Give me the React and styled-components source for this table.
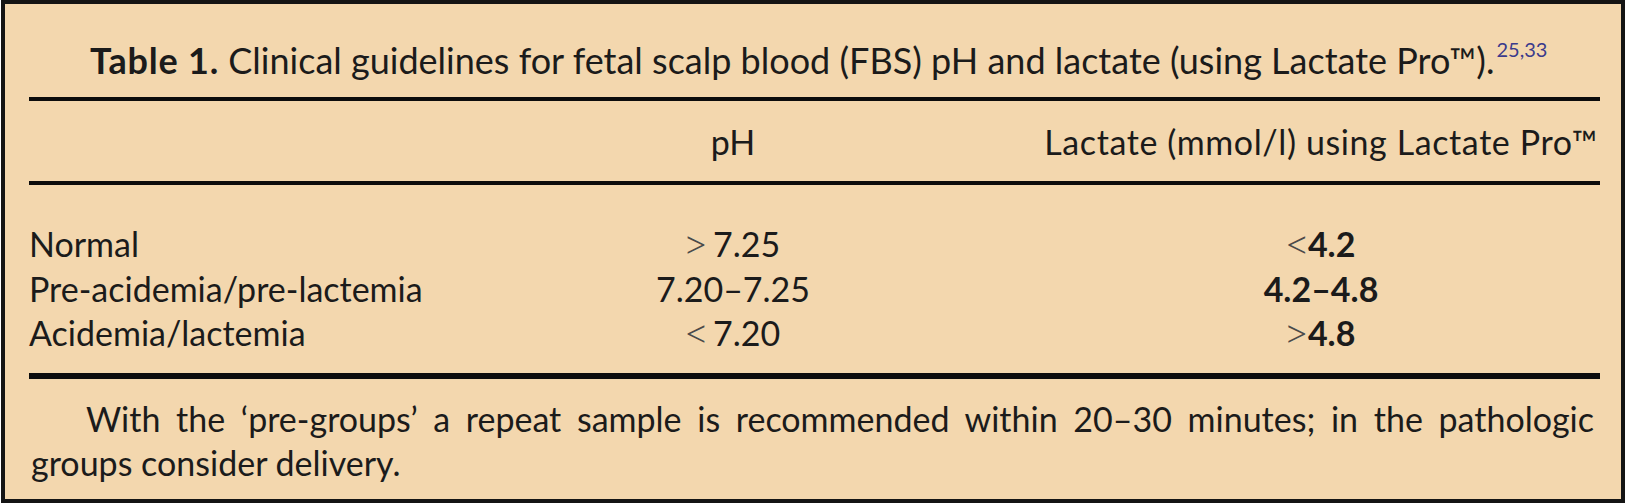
import styled, { createGlobalStyle } from 'styled-components';

const GlobalStyle = createGlobalStyle`
    html, body {
        margin: 0;
        padding: 0;
        background: #ffffff;
    }
    body {
        font-family: Lato, "Open Sans", sans-serif;
        color: #1b1b1b;
    }
`;

const rows = [
    { label: 'Normal', ph: ['>', '7.25'], lactate: ['<', '4.2'] },
    { label: 'Pre-acidemia/pre-lactemia', ph: ['', '7.20–7.25'], lactate: ['', '4.2–4.8'] },
    { label: 'Acidemia/lactemia', ph: ['<', '7.20'], lactate: ['>', '4.8'] },
];

const Value = ({ pair, spaced }) => (
    <>
        {pair[0] && <Relation $spaced={spaced}>{pair[0]}</Relation>}
        {pair[1]}
    </>
);

const App = () => {
    return (
        <>
            <GlobalStyle />
            <Panel>
                <Caption>
                    <CaptionLabel>Table 1.</CaptionLabel> Clinical guidelines for fetal scalp blood (FBS) pH and
                    lactate (using Lactate Pro™).<Ref>25,33</Ref>
                </Caption>
                <Rule />
                <HeadRow>
                    <Cell />
                    <Cell $center>pH</Cell>
                    <Cell $center $wide>Lactate (mmol/l) using Lactate Pro™</Cell>
                </HeadRow>
                <Rule />
                <Body>
                    {rows.map((row) => (
                        <BodyRow key={row.label}>
                            <Cell>{row.label}</Cell>
                            <Cell $center>
                                <Value pair={row.ph} spaced />
                            </Cell>
                            <Cell $center $heavy>
                                <Value pair={row.lactate} />
                            </Cell>
                        </BodyRow>
                    ))}
                </Body>
                <Rule $thick />
                <Note>
                    <NoteLine $first>
                        With the ‘pre-groups’ a repeat sample is recommended within 20–30 minutes; in the pathologic
                    </NoteLine>
                    <NoteLine>groups consider delivery.</NoteLine>
                </Note>
            </Panel>
        </>
    );
};

export default App;

const Panel = styled.div`
    box-sizing: border-box;
    width: 1624px;
    height: 503px;
    margin-left: 1px;
    padding: 36px 21px 0 24px;
    background-color: #f3d7ae;
    border: 4px solid #141414;
    display: flex;
    flex-direction: column;
`;

const Caption = styled.div`
    font-size: 36px;
    line-height: 40px;
    padding-left: 61px;
    margin-bottom: 17px;
    white-space: nowrap;
`;

const CaptionLabel = styled.span`
    font-weight: 700;
    letter-spacing: 0.8px;
`;

const Ref = styled.sup`
    font-size: 20px;
    color: #3b3b8c;
    margin-left: 2px;
    vertical-align: 17px;
    line-height: 0;
`;

const Rule = styled.div`
    height: ${(p) => (p.$thick ? '6px' : '4px')};
    background-color: #0c0c0c;
`;

const HeadRow = styled.div`
    display: grid;
    grid-template-columns: 395px 618px 1fr;
    padding: 19px 0 17px;
    font-size: 34px;
    line-height: 44px;
`;

const Body = styled.div`
    display: flex;
    flex-direction: column;
    padding: 37px 0 17px;
`;

const BodyRow = styled.div`
    display: grid;
    grid-template-columns: 395px 618px 1fr;
    font-size: 34px;
    line-height: 44px;
`;

const Cell = styled.div`
    text-align: ${(p) => (p.$center ? 'center' : 'left')};
    font-weight: ${(p) => (p.$heavy ? 700 : 400)};
    letter-spacing: ${(p) => (p.$wide ? '0.6px' : 'normal')};
    white-space: nowrap;
`;

const Relation = styled.span`
    font-family: "Liberation Serif", serif;
    font-weight: 400;
    font-size: 36px;
    color: #4a4a4a;
    margin-right: ${(p) => (p.$spaced ? '7px' : '1px')};
`;

const Note = styled.div`
    padding: 18px 6px 0 2px;
    font-size: 34px;
    line-height: 44px;
`;

const NoteLine = styled.div`
    text-align: ${(p) => (p.$first ? 'justify' : 'left')};
    text-align-last: ${(p) => (p.$first ? 'justify' : 'left')};
    text-indent: ${(p) => (p.$first ? '55px' : '0')};
    white-space: nowrap;
`;
